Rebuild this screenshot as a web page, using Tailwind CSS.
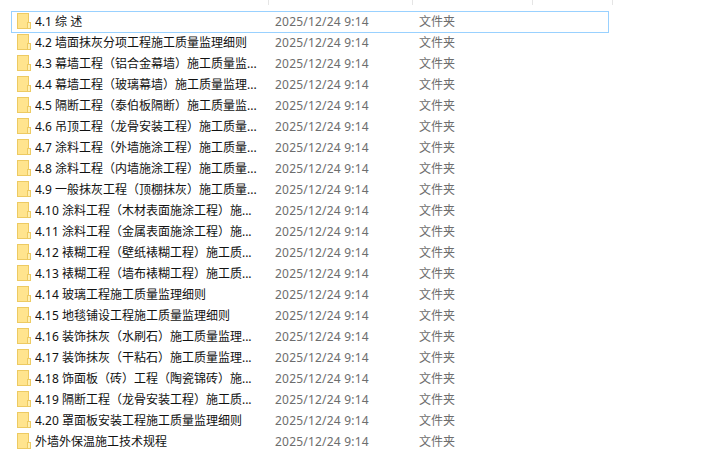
<!DOCTYPE html>
<html lang="en">
<head>
  <meta charset="UTF-8" />
  <title>文件夹</title>
  <script src="https://cdn.jsdelivr.net/npm/@tailwindcss/browser@4"></script>
</head>
<body class="bg-white w-[714px] h-[451px] overflow-hidden font-['Noto_Sans','Noto_Sans_CJK_SC',sans-serif] text-[12px] leading-[20px]">
  <!-- column header dividers -->
  <div class="h-[11px]">
    <div class="flex h-[5px]">
      <div class="w-[269px] border-r border-[#e5e5e5]"></div>
      <div class="w-[144px] border-r border-[#e5e5e5]"></div>
      <div class="w-[120px] border-r border-[#e5e5e5]"></div>
      <div class="w-[80px] border-r border-[#e5e5e5]"></div>
    </div>
  </div>

  <div id="list" class="w-[598px] ml-[11px]">
    <div class="flex h-[22px] items-center border border-[#99d1ff] -mb-px">
      <svg class="w-[14px] h-[16px] ml-[5px] shrink-0 -translate-y-px" viewBox="0 0 14 16"><rect x="0.5" y="0.5" width="11" height="15" fill="#ffe48e" stroke="#edca62"/><rect x="10.5" y="9.5" width="3" height="6" fill="#fff0b4" stroke="#edca62"/></svg>
      <span class="ml-[4px] w-[240px] truncate text-[#111111]">4.1 综 述</span>
      <span class="w-[144px] tracking-[0.2px] text-[#6d6d6d]">2025/12/24 9:14</span>
      <span class="text-[#6d6d6d]">文件夹</span>
    </div>
  </div>

  <script>
    // rows after the selected first one
    const names = [
      "4.2 墙面抹灰分项工程施工质量监理细则",
      "4.3 幕墙工程（铝合金幕墙）施工质量监...",
      "4.4 幕墙工程（玻璃幕墙）施工质量监理...",
      "4.5 隔断工程（泰伯板隔断）施工质量监...",
      "4.6 吊顶工程（龙骨安装工程）施工质量...",
      "4.7 涂料工程（外墙施涂工程）施工质量...",
      "4.8 涂料工程（内墙施涂工程）施工质量...",
      "4.9 一般抹灰工程（顶棚抹灰）施工质量...",
      "4.10 涂料工程（木材表面施涂工程）施...",
      "4.11 涂料工程（金属表面施涂工程）施...",
      "4.12 裱糊工程（壁纸裱糊工程）施工质...",
      "4.13 裱糊工程（墙布裱糊工程）施工质...",
      "4.14 玻璃工程施工质量监理细则",
      "4.15 地毯铺设工程施工质量监理细则",
      "4.16 装饰抹灰（水刷石）施工质量监理...",
      "4.17 装饰抹灰（干粘石）施工质量监理...",
      "4.18 饰面板（砖）工程（陶瓷锦砖）施...",
      "4.19 隔断工程（龙骨安装工程）施工质...",
      "4.20 罩面板安装工程施工质量监理细则",
      "外墙外保温施工技术规程"
    ];
    const list = document.getElementById("list");
    for (const name of names) {
      const row = document.createElement("div");
      row.className = "flex h-[22px] items-center border border-transparent -mb-px";
      row.innerHTML = `<svg class="w-[14px] h-[16px] ml-[5px] shrink-0 -translate-y-px" viewBox="0 0 14 16"><rect x="0.5" y="0.5" width="11" height="15" fill="#ffe48e" stroke="#edca62"/><rect x="10.5" y="9.5" width="3" height="6" fill="#fff0b4" stroke="#edca62"/></svg>
        <span class="ml-[4px] w-[240px] truncate text-[#111111]"></span>
        <span class="w-[144px] tracking-[0.2px] text-[#6d6d6d]">2025/12/24 9:14</span>
        <span class="text-[#6d6d6d]">文件夹</span>`;
      row.children[1].textContent = name;
      list.appendChild(row);
    }
  </script>
</body>
</html>
